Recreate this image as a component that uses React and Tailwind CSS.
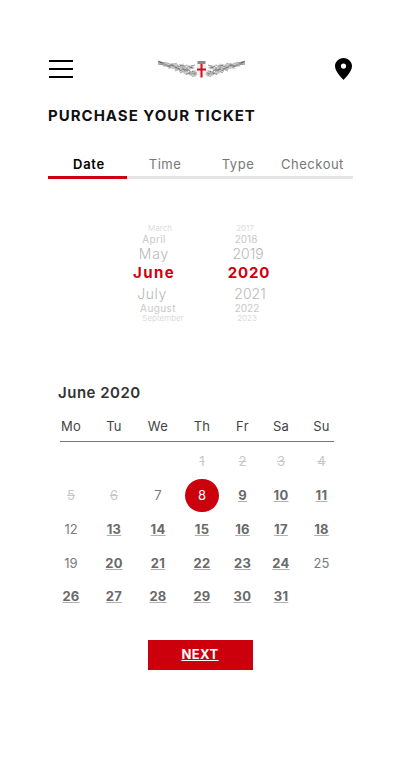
import React from "react";

const font = { fontFamily: '"Inter","Liberation Sans",sans-serif' };

function wing() {
  const out = [];
  let s = 7;
  const rnd = () => {
    s = (s * 16807) % 2147483647;
    return s / 2147483647;
  };
  const shades = ["#666666", "#8c8c8c", "#b0b0b0", "#d2d2d2"];
  for (let i = 0; i < 150; i++) {
    const t = rnd();
    const cx = 1 + t * 37;
    const mid = 5 + t * 8.5;
    const spread = 1 + t * 4.6;
    const cy = mid + (rnd() - 0.5) * 2 * spread;
    const a = -0.5 + rnd() * 1.2;
    const l = 1 + rnd() * 1.6;
    out.push({
      d: `M${(cx - Math.cos(a) * l).toFixed(1)} ${(cy - Math.sin(a) * l).toFixed(1)}L${(cx + Math.cos(a) * l).toFixed(1)} ${(cy + Math.sin(a) * l).toFixed(1)}`,
      c: shades[Math.floor(rnd() * 4)],
    });
  }
  return out;
}
const leaves = wing();

function Logo() {
  const g = leaves.map((l, i) => <path key={i} d={l.d} stroke={l.c} />);
  return (
    <svg width="87" height="22" viewBox="0 0 87 22" fill="none">
      <g strokeWidth="0.7" strokeLinecap="round">
        {g}
        <g transform="translate(87 0) scale(-1 1)">{g}</g>
      </g>
      <path d="M39.500 3h8v3h-8z" fill="#8a8a8a" />
      <path d="M39 6h9v8c0 3-2.500 4.500-4.500 6-2-1.500-4.500-3-4.500-6z" fill="#eee" />
      <path d="M42.500 6h2v4.500h3.500v2h-3.500v7h-2v-7h-3.500v-2h3.500z" fill="#d2111c" />
    </svg>
  );
}

const tabs = [
  ["Date", "w-[79px] pl-[3px] text-center font-semibold text-black tracking-[0.7px]"],
  ["Time", "w-[76px] text-center text-[#777] tracking-[0.5px]"],
  ["Type", "w-[70px] text-center text-[#777] tracking-[0.5px]"],
  ["Checkout", "w-[80px] pr-[1px] text-center text-[#777] tracking-[0.5px]"],
];

const months = [
  ["March", "h-[12px] pl-[12px] text-[8px] leading-[12px] text-[#dcdcdc]"],
  ["April", "h-[10px] text-[10px] leading-[10px] text-[#c8c8c8] tracking-[0.3px]"],
  ["May", "h-[20px] text-[14px] leading-[20px] text-[#b8b8b8] tracking-[0.8px] font-light"],
  ["June", "h-[18px] text-[15px] leading-[18px] font-bold text-[#d0000f] tracking-[1.4px]"],
  ["July", "h-[24px] pr-[4px] text-[14px] leading-[24px] text-[#b8b8b8] tracking-[0.6px] font-light"],
  ["August", "h-[4px] pl-[8px] text-[10px] leading-[4px] text-[#c8c8c8] tracking-[0.4px]"],
  ["September", "h-[16px] pl-[18px] text-[8px] leading-[16px] text-[#dcdcdc]"],
];
const yearRows = [
  ["2017", "h-[12px] pr-[8px] text-[8px] leading-[12px] text-[#dcdcdc]"],
  ["2018", "h-[10px] pr-[6px] text-[10px] leading-[10px] text-[#c8c8c8]"],
  ["2019", "h-[20px] pr-[2px] text-[14px] leading-[20px] text-[#b8b8b8] font-light"],
  ["2020", "h-[18px] text-[15px] leading-[18px] font-bold text-[#d0000f] tracking-[0.8px]"],
  ["2021", "h-[24px] pl-[2px] text-[14px] leading-[24px] text-[#b8b8b8] font-light"],
  ["2022", "h-[4px] pr-[4px] text-[10px] leading-[4px] text-[#c8c8c8]"],
  ["2023", "h-[16px] pr-[4px] text-[8px] leading-[16px] text-[#dcdcdc]"],
];

const weekdays = ["Mo", "Tu", "We", "Th", "Fr", "Sa", "Su"];
const D = "d", O = "o", B = "b";
const rows = [
  [null, null, null, [1, D], [2, D], [3, D], [4, D]],
  [[5, D], [6, D], [7, O], [8, "s"], [9, B], [10, B], [11, B]],
  [[12, O], [13, B], [14, B], [15, B], [16, B], [17, B], [18, B]],
  [[19, O], [20, B], [21, B], [22, B], [23, B], [24, B], [25, O]],
  [[26, B], [27, B], [28, B], [29, B], [30, B], [31, B], null],
];
const cols = "grid grid-cols-[42px_44px_44px_44px_37px_40px_41px]";

function Day({ cell }) {
  if (!cell) return <div />;
  const [n, k] = cell;
  if (k === "s")
    return (
      <div className="flex items-center justify-center">
        <span className="flex h-[33px] w-[34px] items-center justify-center rounded-full bg-[#cc000c] text-[13px] text-white">{n}</span>
      </div>
    );
  const cls =
    k === "d"
      ? "text-[#c8c8c8] line-through font-normal"
      : k === "b"
      ? "text-[#6a6a6a] font-bold underline decoration-[#b0b0b0] tracking-[0.3px]"
      : "text-[#7a7a7a] font-normal";
  return <div className={`flex items-center justify-center text-[13px] ${cls}`}>{n}</div>;
}

export default function App() {
  return (
    <div style={font} className="h-[766px] w-[401px] overflow-hidden bg-white">
      <header className="mt-[58px] flex h-[22px] items-center justify-between pl-[49px] pr-[49px]">
        <div className="flex w-[24px] flex-col gap-[6px]">
          <span className="h-[2px] bg-black" />
          <span className="h-[2px] bg-black" />
          <span className="h-[2px] bg-black" />
        </div>
        <div className="ml-[-5px]"><Logo /></div>
        <svg width="17" height="22" viewBox="0 0 17 22">
          <path fillRule="evenodd" d="M8.500 0C3.800 0 0 3.700 0 8.300 0 14 8.500 22 8.500 22S17 14 17 8.300C17 3.700 13.200 0 8.500 0ZM8.500 10.700a2.600 2.600 0 1 1 0-5.200 2.600 2.600 0 0 1 0 5.200Z" fill="#000" />
        </svg>
      </header>

      <h1 className="ml-[48px] mt-[26px] text-[15px] leading-[20px] font-bold tracking-[1px] text-[#111]">PURCHASE YOUR TICKET</h1>

      <nav className="mx-[48px] mt-[29px] w-[305px]">
        <div className="flex text-[13px] leading-[18px]">
          {tabs.map(([t, c]) => (
            <div key={t} className={c}>{t}</div>
          ))}
        </div>
        <div className="mt-[3px] h-[3px] bg-[#e4e4e4]">
          <div className="h-[3px] w-[79px] bg-[#d0000f]" />
        </div>
      </nav>

      <section className="mt-[43px] flex pl-[104px]">
        <div className="w-[100px] text-center">
          {months.map(([m, c]) => (
            <div key={m} className={c}>{m}</div>
          ))}
        </div>
        <div className="ml-[-5px] w-[100px] text-center">
          {yearRows.map(([y, c]) => (
            <div key={y} className={c}>{y}</div>
          ))}
        </div>
      </section>

      <section className="mt-[57px]">
        <h2 className="ml-[58px] text-[15px] leading-[20px] font-semibold tracking-[0.5px] text-[#333]">June 2020</h2>
        <div className={`${cols} ml-[50px] mt-[14px] h-[20px] items-center text-center text-[13px] tracking-[0.3px] text-[#444]`}>
          {weekdays.map((w) => (
            <div key={w}>{w}</div>
          ))}
        </div>
        <div className="ml-[60px] mt-[4px] h-px w-[274px] bg-[#777]" />
        <div className="ml-[50px] mt-[3px]">
          {rows.map((r, i) => (
            <div key={i} className={`${cols} h-[33.800px] items-center`}>
              {r.map((c, j) => (
                <Day key={j} cell={c} />
              ))}
            </div>
          ))}
        </div>
      </section>

      <div className="mt-[26px] flex justify-center">
        <button className="ml-[-1px] h-[30px] w-[105px] bg-[#cc000c] text-[13px] font-bold tracking-[0.4px] text-white underline">NEXT</button>
      </div>
    </div>
  );
}
